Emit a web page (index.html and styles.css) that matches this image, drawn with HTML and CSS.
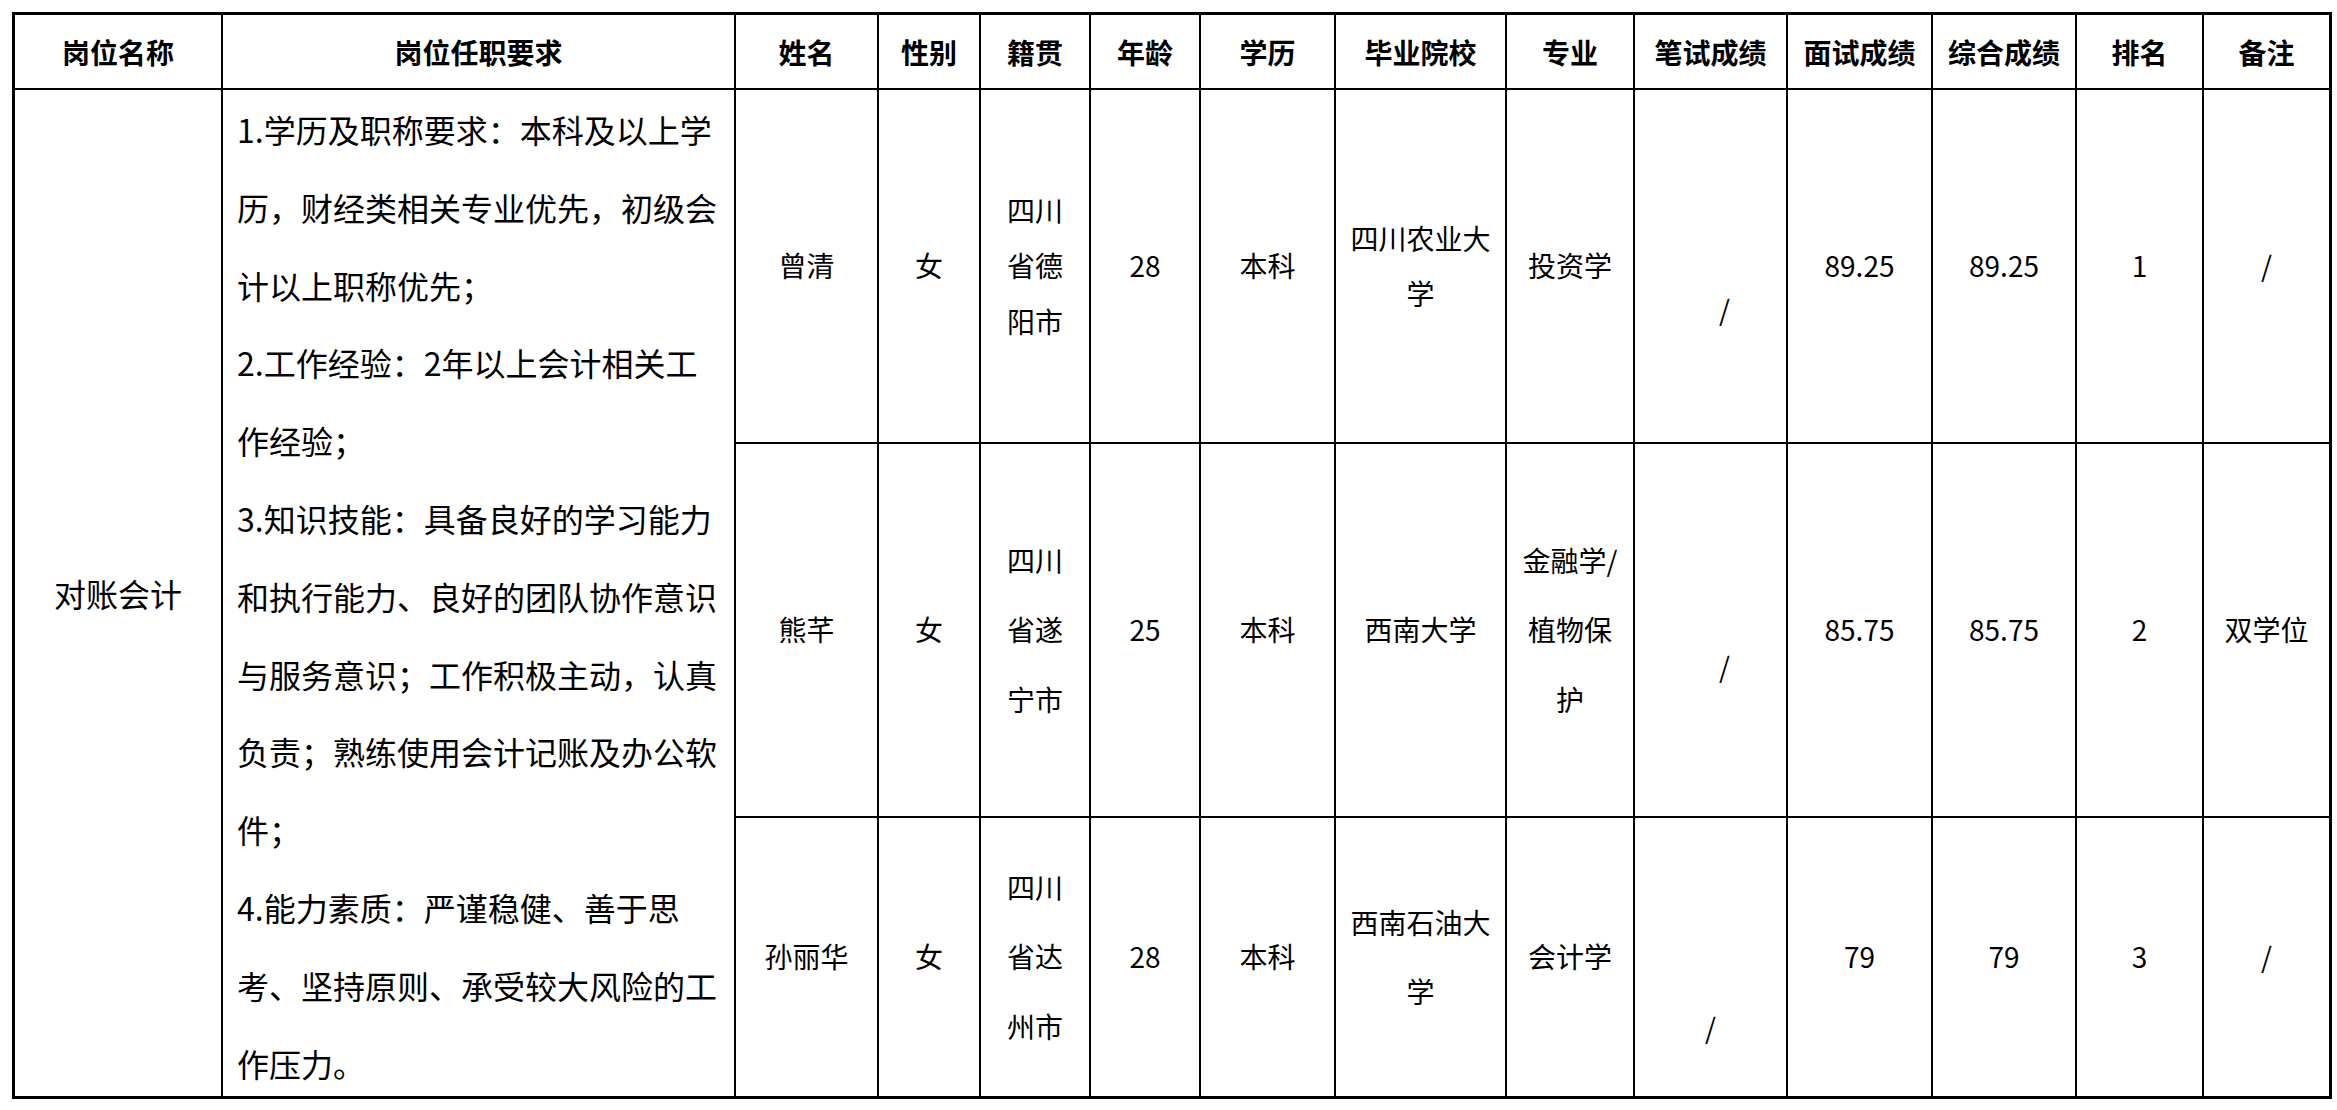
FILE: index.html
```html
<!DOCTYPE html>
<html lang="zh-CN">
<head>
<meta charset="utf-8">
<title>对账会计</title>
<link rel="stylesheet" href="styles.css">
</head>
<body>
<div class="sheet">
  <div class="cell head">岗位名称</div>
  <div class="cell head">岗位任职要求</div>
  <div class="cell head">姓名</div>
  <div class="cell head">性别</div>
  <div class="cell head">籍贯</div>
  <div class="cell head">年龄</div>
  <div class="cell head">学历</div>
  <div class="cell head">毕业院校</div>
  <div class="cell head">专业</div>
  <div class="cell head">笔试成绩</div>
  <div class="cell head">面试成绩</div>
  <div class="cell head">综合成绩</div>
  <div class="cell head">排名</div>
  <div class="cell head">备注</div>

  <div class="cell span3 big">对账会计</div>
  <div class="cell span3 req">1.学历及职称要求：本科及以上学历，财经类相关专业优先，初级会计以上职称优先；<br>2.工作经验：2年以上会计相关工作经验；<br>3.知识技能：具备良好的学习能力和执行能力、良好的团队协作意识与服务意识；工作积极主动，认真负责；熟练使用会计记账及办公软件；<br>4.能力素质：严谨稳健、善于思考、坚持原则、承受较大风险的工作压力。</div>

  <div class="cell r1">曾清</div>
  <div class="cell r1">女</div>
  <div class="cell r1">四川省德阳市</div>
  <div class="cell r1">28</div>
  <div class="cell r1">本科</div>
  <div class="cell r1">四川农业大学</div>
  <div class="cell r1">投资学</div>
  <div class="cell r1 slash slash-r1">/</div>
  <div class="cell r1">89.25</div>
  <div class="cell r1">89.25</div>
  <div class="cell r1">1</div>
  <div class="cell r1">/</div>

  <div class="cell r2">熊芊</div>
  <div class="cell r2">女</div>
  <div class="cell r2">四川省遂宁市</div>
  <div class="cell r2">25</div>
  <div class="cell r2">本科</div>
  <div class="cell r2">西南大学</div>
  <div class="cell r2">金融学/植物保护</div>
  <div class="cell r2 slash slash-r2">/</div>
  <div class="cell r2">85.75</div>
  <div class="cell r2">85.75</div>
  <div class="cell r2">2</div>
  <div class="cell r2">双学位</div>

  <div class="cell r3">孙丽华</div>
  <div class="cell r3">女</div>
  <div class="cell r3">四川省达州市</div>
  <div class="cell r3">28</div>
  <div class="cell r3">本科</div>
  <div class="cell r3">西南石油大学</div>
  <div class="cell r3">会计学</div>
  <div class="cell r3 slash slash-r3">/</div>
  <div class="cell r3">79</div>
  <div class="cell r3">79</div>
  <div class="cell r3">3</div>
  <div class="cell r3">/</div>
</div>
</body>
</html>
```

FILE: styles.css
```css
html, body {
  margin: 0;
  padding: 0;
  background: #fff;
}

body {
  font-family: "Noto Sans CJK SC", "Noto Sans", sans-serif;
  color: #000;
}

.sheet {
  display: grid;
  width: max-content;
  margin: 12px 0 0 12px;
  grid-template-columns: 206px 511px 141px 100px 108px 108px 133px 169px 126px 151px 143px 142px 125px 125px;
  grid-template-rows: 73px 352px 372px 278px;
  gap: 2px;
  background: #000;
  border: 3px solid #000;
}

.cell {
  background: #fff;
  display: flex;
  align-items: center;
  justify-content: center;
  text-align: center;
  padding: 0 14px;
  font-size: 28px;
  line-height: 55px;
  min-width: 0;
  overflow: visible;
}

.head {
  font-weight: 700;
  line-height: 36px;
}

.span3 {
  grid-row: span 3;
}

.big {
  font-size: 32px;
  line-height: 40px;
}

.req {
  display: block;
  text-align: left;
  font-size: 32px;
  line-height: 77.8px;
  padding: 1px 14px 0 14px;
}

.r1 {
  line-height: 55.5px;
}

.r2,
.r3 {
  line-height: 69.5px;
}

.slash-r1 {
  padding: 88px 0 0 28px;
}

.slash-r2 {
  padding: 74px 0 0 28px;
}

.slash-r3 {
  padding: 142px 0 0 0;
}
```
